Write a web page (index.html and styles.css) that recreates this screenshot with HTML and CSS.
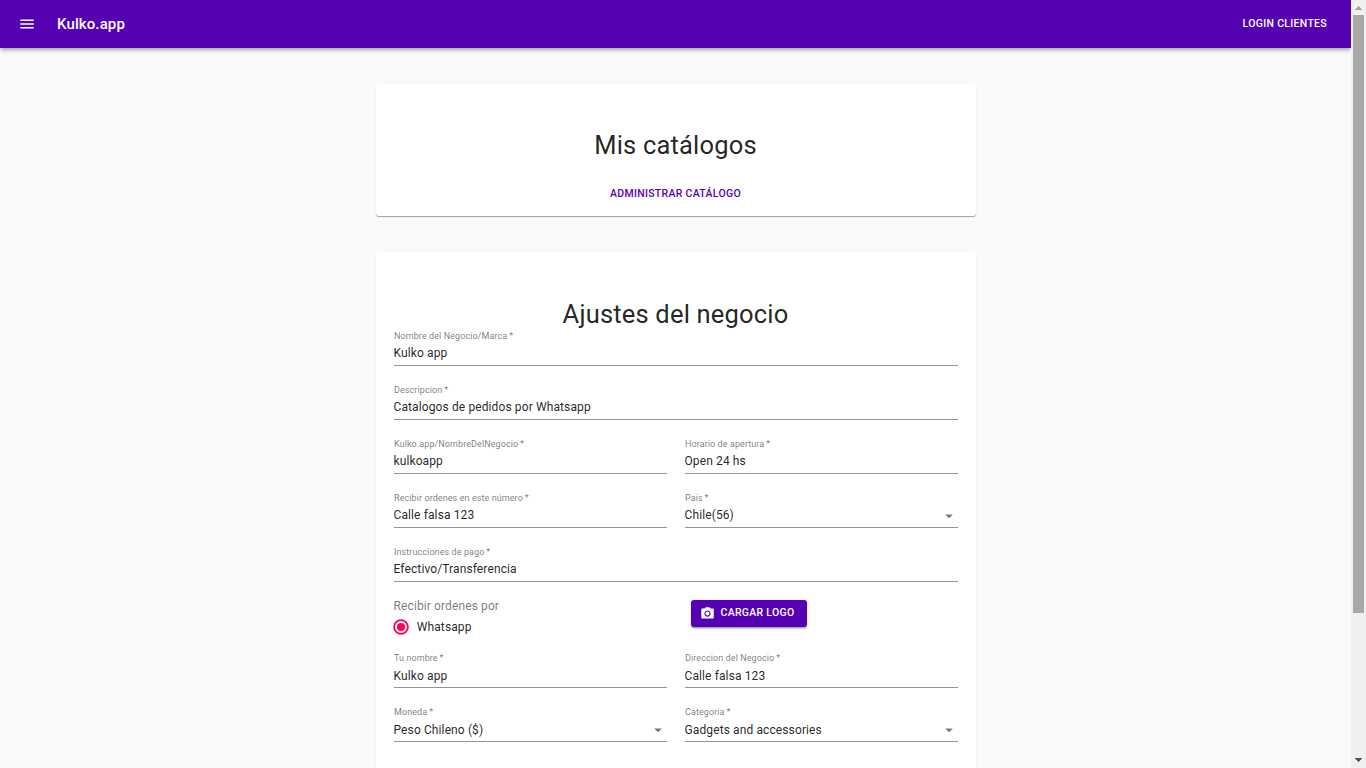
FILE: index.html
```html
<!DOCTYPE html>
<html lang="es">
<head>
<meta charset="utf-8">
<title>Kulko.app</title>
<link rel="stylesheet" href="styles.css">
</head>
<body>
<div class="window">
  <div class="page">
    <header class="appbar">
      <svg class="menu-icon" viewBox="0 0 24 24"><path d="M3 18h18v-2H3v2zm0-5h18v-2H3v2zm0-7v2h18V6H3z"/></svg>
      <h6 class="brand">Kulko.app</h6>
      <button class="button login">Login clientes</button>
    </header>
    <main class="container">
      <section class="card catalogs">
        <h4 class="heading">Mis catálogos</h4>
        <button class="button manage">Administrar catálogo</button>
      </section>
      <section class="card settings">
        <h4 class="heading">Ajustes del negocio</h4>
        <form class="grid">
          <div class="field wide"><label class="label">Nombre del Negocio/Marca&thinsp;*</label><div class="value">Kulko app</div></div>
          <div class="field wide"><label class="label">Descripcion&thinsp;*</label><div class="value">Catalogos de pedidos por Whatsapp</div></div>
          <div class="field"><label class="label">Kulko.app/NombreDelNegocio&thinsp;*</label><div class="value">kulkoapp</div></div>
          <div class="field"><label class="label">Horario de apertura&thinsp;*</label><div class="value">Open 24 hs</div></div>
          <div class="field"><label class="label">Recibir ordenes en este número&thinsp;*</label><div class="value">Calle falsa 123</div></div>
          <div class="field"><label class="label">Pais&thinsp;*</label><div class="value">Chile(56)<svg class="arrow country" viewBox="0 0 24 24"><path d="M7 10l5 5 5-5z"/></svg></div></div>
          <div class="field wide"><label class="label">Instrucciones de pago&thinsp;*</label><div class="value">Efectivo/Transferencia</div></div>
          <div class="orders">
            <div class="legend">Recibir ordenes por</div>
            <div class="option">
              <svg class="radio" viewBox="0 0 24 24"><circle class="ring" cx="12" cy="12" r="9.200"/><circle cx="12" cy="12" r="5.400"/></svg>
              <span>Whatsapp</span>
            </div>
          </div>
          <div class="upload">
            <button class="button contained" type="button"><svg class="camera" viewBox="0 0 24 24"><circle cx="12" cy="12" r="3.200"/><path d="M9 2L7.170 4H4c-1.100 0-2 .9-2 2v12c0 1.100.9 2 2 2h16c1.100 0 2-.9 2-2V6c0-1.100-.9-2-2-2h-3.170L15 2H9zm3 15c-2.760 0-5-2.240-5-5s2.240-5 5-5 5 2.240 5 5-2.240 5-5 5z"/></svg>Cargar logo</button>
          </div>
          <div class="field owner"><label class="label">Tu nombre&thinsp;*</label><div class="value">Kulko app</div></div>
          <div class="field owner"><label class="label">Direccion del Negocio&thinsp;*</label><div class="value">Calle falsa 123</div></div>
          <div class="field owner"><label class="label">Moneda&thinsp;*</label><div class="value">Peso Chileno ($)<svg class="arrow" viewBox="0 0 24 24"><path d="M7 10l5 5 5-5z"/></svg></div></div>
          <div class="field owner"><label class="label">Categoria&thinsp;*</label><div class="value">Gadgets and accessories<svg class="arrow" viewBox="0 0 24 24"><path d="M7 10l5 5 5-5z"/></svg></div></div>
        </form>
      </section>
    </main>
  </div>
  <div class="scrollbar">
    <svg class="step up" viewBox="0 0 15 15"><path d="M4 10h7v-1h-1v-1h-1v-1h-1v-1h-1v1h-1v1h-1v1h-1z"/></svg>
    <div class="thumb"></div>
    <svg class="step down" viewBox="0 0 15 15"><path d="M4 5h7v1h-1v1h-1v1h-1v1h-1v-1h-1v-1h-1v-1h-1z"/></svg>
  </div>
</div>
</body>
</html>
```
FILE: styles.css
```css
* { box-sizing: border-box; }
body {
  margin: 0;
  overflow: hidden;
  background: #fafafa;
  color: rgba(0, 0, 0, 0.87);
  font: 400 12px/1.5 Roboto, sans-serif;
  letter-spacing: 0.00938em;
}
.window { display: flex; height: 768px; overflow: hidden; }
.page { flex: 1; height: 768px; overflow: hidden; }

.appbar {
  display: flex;
  align-items: center;
  height: 48px;
  padding: 0 18px;
  background: #5600b4;
  color: #fff;
  box-shadow: 0 1.5px 3px -0.75px rgba(0,0,0,.2), 0 3px 3.75px 0 rgba(0,0,0,.14), 0 0.75px 7.5px 0 rgba(0,0,0,.12);
}
.menu-icon { width: 18px; height: 18px; margin-right: 21px; fill: currentColor; }
.brand { flex: 1; margin: 0; font-size: 15px; font-weight: 500; line-height: 1.6; letter-spacing: 0.0075em; }

.button {
  display: inline-flex;
  align-items: center;
  justify-content: center;
  margin: 0;
  padding: 4.5px 6px;
  border: 0;
  border-radius: 3px;
  background: transparent;
  color: inherit;
  font: 500 10.5px/1.75 Roboto, sans-serif;
  letter-spacing: 0.02857em;
  text-transform: uppercase;
}
.manage { color: #5600b4; }
.contained {
  padding: 4.5px 12px;
  background: #5600b4;
  color: #fff;
  box-shadow: 0 2.25px 0.75px -1.5px rgba(0,0,0,.2), 0 1.5px 1.5px 0 rgba(0,0,0,.14), 0 0.75px 3.75px 0 rgba(0,0,0,.12);
}
.camera { width: 15px; height: 15px; margin: 0 6px 0 -3px; fill: currentColor; }

.container { width: 600px; margin: 36px auto 0; }
.card {
  margin-bottom: 36px;
  border-radius: 3px;
  background: #fff;
  box-shadow: 0 1px 0 0 rgba(0,0,0,.27), 0 1px 2px 0 rgba(0,0,0,.1);
}
.catalogs { display: flex; flex-direction: column; align-items: center; height: 132px; padding-top: 45.5px; }
.catalogs .heading { margin-bottom: 19.5px; }
.settings { height: 620px; padding: 46.5px 18px 0; }
.heading { margin: 0; font-size: 25.5px; font-weight: 400; line-height: 31.5px; letter-spacing: 0.00735em; text-align: center; }

.grid { display: grid; grid-template-columns: 1fr 1fr; gap: 18px; }
.wide { grid-column: span 2; }
.field { position: relative; height: 36px; padding-top: 12px; }
.label {
  position: absolute;
  top: 0;
  left: 0;
  color: rgba(0, 0, 0, 0.54);
  line-height: 1;
  white-space: nowrap;
  transform: translate(0, 1.125px) scale(0.75);
  transform-origin: top left;
}
.value {
  display: flex;
  align-items: center;
  justify-content: space-between;
  height: 24px;
  padding-bottom: 1px;
  border-bottom: 1px solid rgba(0, 0, 0, 0.42);
  line-height: 14px;
}
.owner .value { padding: 1px 0 0; }
.arrow { width: 18px; height: 18px; fill: rgba(0, 0, 0, 0.54); }
.country { margin-top: 2px; }

.orders { height: 34px; }
.legend { color: rgba(0, 0, 0, 0.54); line-height: 12px; }
.option { display: flex; align-items: center; gap: 6.75px; height: 29px; margin-left: -1.5px; }
.radio { width: 18px; height: 18px; fill: #ff0057; }
.ring { fill: none; stroke: #ff0057; stroke-width: 2.4; }
.upload { padding-left: 6px; }
.upload .button { height: 27px; }

.scrollbar { display: flex; flex-direction: column; width: 15px; height: 768px; background: #f0f0f0; }
.step { width: 15px; height: 15px; shape-rendering: crispEdges; }
.up { fill: #a3a3a3; }
.down { margin-top: auto; fill: #505050; }
.thumb { width: 11px; height: 598px; margin-left: 2px; background: #a8a8a8; }
```
